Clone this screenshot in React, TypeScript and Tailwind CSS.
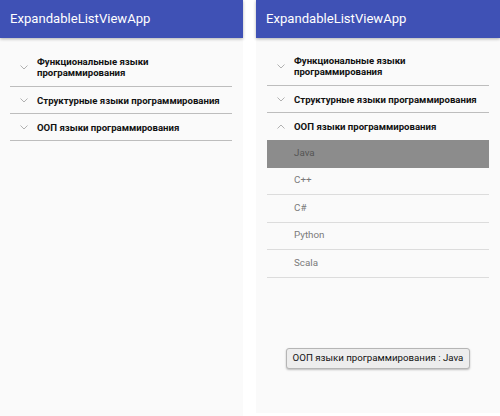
import React from "react";

const font = { fontFamily: "Roboto, 'Noto Sans', Arial, sans-serif" };

function Chevron({ up = false }: { up?: boolean }) {
  return (
    <svg width="8" height="5" viewBox="0 0 8 5" className="shrink-0">
      <path
        d={up ? "M0.5 4.5 L4 1 L7.5 4.5" : "M0.5 0.5 L4 4 L7.5 0.5"}
        fill="none"
        stroke="#a8a8a8"
        strokeWidth="0.9"
      />
    </svg>
  );
}

function GroupRow({
  title,
  up = false,
  tall = false,
  last = false,
}: {
  title: React.ReactNode;
  up?: boolean;
  tall?: boolean;
  last?: boolean;
}) {
  return (
    <div
      className={`flex items-center ${tall ? "h-[39px]" : "h-[27px]"} ${
        last ? "" : "border-b-[1.5px] border-[#bdbdbd]"
      }`}
    >
      <div className="w-[27px] pl-[10px] flex items-center">
        <Chevron up={up} />
      </div>
      <div className="text-[9.6px] leading-[11px] font-bold text-[#111]">{title}</div>
    </div>
  );
}

function Header() {
  return (
    <div className="h-[38px] bg-[#3f51b5] flex items-center pl-[10px] shadow-[0_1px_3px_rgba(0,0,0,0.3)] relative z-10">
      <span className="text-white text-[13.1px] pb-[1px]">ExpandableListViewApp</span>
    </div>
  );
}

function ChildRow({ name, selected = false }: { name: string; selected?: boolean }) {
  return (
    <div
      className={`h-[27.5px] flex items-center pl-[27px] text-[9.8px] ${
        selected
          ? "bg-[#8c8c8c] text-[#555]"
          : "border-b border-[#dcdcdc] text-[#7a7a7a]"
      }`}
    >
      {name}
    </div>
  );
}

export default function App() {
  return (
    <div className="w-[500px] h-[416px] bg-white flex" style={font}>
      {/* collapsed state */}
      <div className="w-[243px] h-[416px] bg-[#fafafa] flex flex-col">
        <Header />
        <div className="mx-[10px] mt-[10px] w-[222px]">
          <GroupRow tall title={<>Функциональные языки<br />программирования</>} />
          <GroupRow title="Структурные языки программирования" />
          <GroupRow title="ООП языки программирования" />
        </div>
      </div>

      <div className="w-[13px]" />

      {/* expanded state */}
      <div className="w-[244px] h-[413px] bg-[#fafafa] flex flex-col relative">
        <Header />
        <div className="mx-[11px] mt-[9px] w-[222px]">
          <GroupRow tall title={<>Функциональные языки<br />программирования</>} />
          <GroupRow title="Структурные языки программирования" />
          <GroupRow up last title="ООП языки программирования" />
          <ChildRow name="Java" selected />
          <ChildRow name="C++" />
          <ChildRow name="C#" />
          <ChildRow name="Python" />
          <ChildRow name="Scala" />
        </div>

        <div className="absolute left-[30px] top-[348px] w-[184px] h-[21px] rounded-[3px] border-[1.5px] border-[#b5b5b5] bg-[#ededed] shadow-[0_1px_2px_rgba(0,0,0,0.25)] flex items-center justify-center text-[9.7px] text-[#111]">
          ООП языки программирования : Java
        </div>
      </div>
    </div>
  );
}
